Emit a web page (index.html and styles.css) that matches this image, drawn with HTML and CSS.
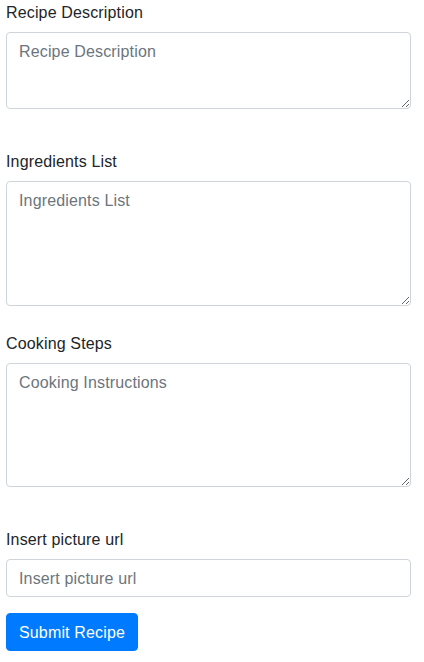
FILE: index.html
```html
<!DOCTYPE html>
<html lang="en">
<head>
<meta charset="utf-8">
<title>Recipe Form</title>
<link rel="stylesheet" href="styles.css">
</head>
<body>
<form class="recipe-form">
  <div class="form-group group-desc">
    <label class="form-label" for="desc">Recipe Description</label>
    <textarea id="desc" class="form-control area-desc" placeholder="Recipe Description"></textarea>
  </div>
  <div class="form-group group-ingr">
    <label class="form-label" for="ingr">Ingredients List</label>
    <textarea id="ingr" class="form-control area-tall" placeholder="Ingredients List"></textarea>
  </div>
  <div class="form-group group-steps">
    <label class="form-label" for="steps">Cooking Steps</label>
    <textarea id="steps" class="form-control area-steps" placeholder="Cooking Instructions"></textarea>
  </div>
  <div class="form-group group-url">
    <label class="form-label" for="url">Insert picture url</label>
    <input id="url" type="text" class="form-control input-url" placeholder="Insert picture url">
  </div>
  <button type="submit" class="btn-primary">Submit Recipe</button>
</form>
</body>
</html>
```

FILE: styles.css
```css
html, body {
  margin: 0;
  padding: 0;
  background: #fff;
}

body {
  font-family: "Liberation Sans", Arial, Helvetica, sans-serif;
  font-size: 16px;
  line-height: 24px;
  color: #212529;
}

.recipe-form {
  padding: 0 6px;
  width: 405px;
}

.form-group {
  display: flex;
  flex-direction: column;
}

.group-desc { margin-bottom: 40px; }
.group-ingr { margin-bottom: 25px; }
.group-steps { margin-bottom: 40px; }
.group-url { margin-bottom: 16px; }

.form-label {
  display: block;
  margin-bottom: 8px;
  padding-top: 1px;
  height: 23px;
  line-height: 24px;
  font-size: 16px;
  letter-spacing: 0.15px;
  color: #212529;
}

.form-control {
  box-sizing: border-box;
  display: block;
  width: 405px;
  margin: 0;
  padding: 7px 12px 5px;
  font-family: "Liberation Sans", Arial, Helvetica, sans-serif;
  font-size: 16px;
  line-height: 24px;
  letter-spacing: 0.15px;
  color: #495057;
  background: #fff;
  border: 1px solid #ced4da;
  border-radius: 4px;
  outline: none;
}

.form-control::placeholder {
  color: #6c757d;
  opacity: 1;
}

.area-desc { height: 77px; }
.area-tall { height: 125px; }
.area-steps { height: 124px; }
.input-url { height: 38px; }

.btn-primary {
  box-sizing: border-box;
  display: inline-block;
  height: 38px;
  padding: 7px 12px 5px;
  font-family: "Liberation Sans", Arial, Helvetica, sans-serif;
  font-size: 16px;
  line-height: 24px;
  letter-spacing: 0.15px;
  color: #fff;
  background: #007bff;
  border: 1px solid #007bff;
  border-radius: 4px;
  cursor: pointer;
}
```
